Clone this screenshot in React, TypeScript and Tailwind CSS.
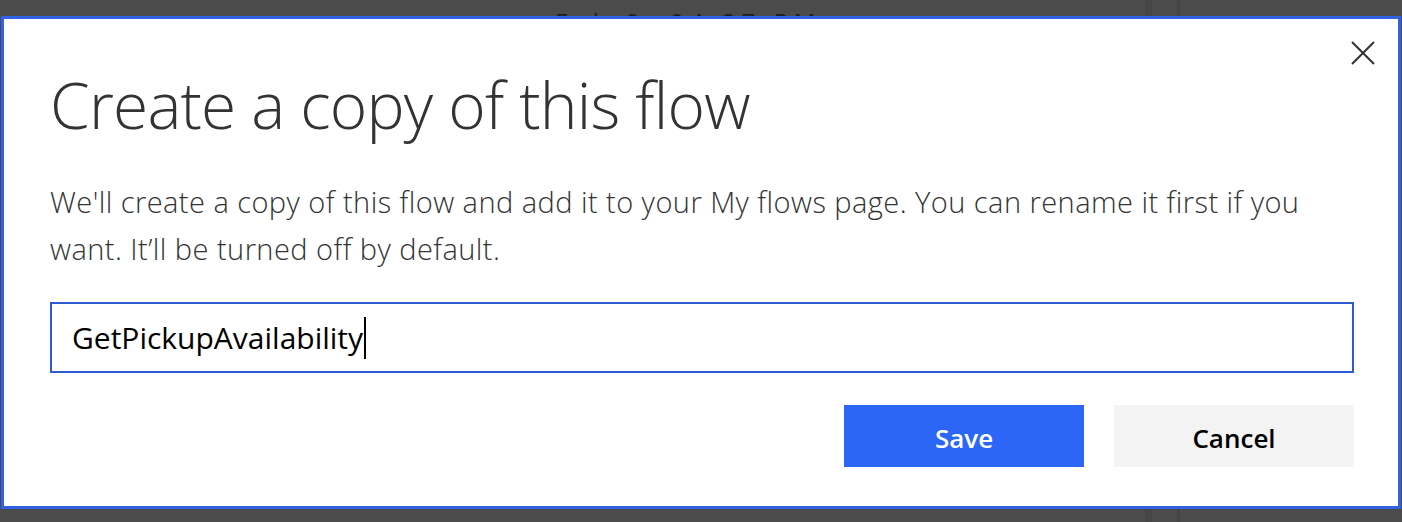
import React from "react";

const font = { fontFamily: '"Open Sans", "Noto Sans", sans-serif' };

export default function App() {
  return (
    <div
      className="relative w-[1402px] h-[522px] overflow-hidden bg-[#4b4b4b]"
      style={font}
    >
      {/* page behind the dialog */}
      <div className="absolute left-[1145px] top-0 h-full w-[7px] bg-[#464646]" />
      <div className="absolute left-[1177px] top-0 h-full w-[3px] bg-[#444444]" />
      <div className="absolute left-[555px] top-[4px] text-[24px] tracking-[6px] text-[#1f1f1f]">
        Feb 9, 04:27 PM
      </div>

      {/* dialog */}
      <div className="absolute left-[1px] top-[16px] w-[1400px] h-[493px] border-[3px] border-[#2f62e4] bg-white">
        <button className="absolute right-[21px] top-[20px] w-[28px] h-[28px] flex items-center justify-center">
          <svg width="26" height="26" viewBox="0 0 26 26">
            <path
              d="M2 2 L24 24 M24 2 L2 24"
              stroke="#333"
              strokeWidth="2"
              fill="none"
            />
          </svg>
        </button>

        <div className="flex flex-col pl-[46px] pr-[44px]">
          <h1 className="mt-[50px] text-[64px] leading-[72px] font-light text-[#333] tracking-[-0.8px]">
            Create a copy of this flow
          </h1>
          <p className="mt-[37px] text-[29px] leading-[47px] font-light text-[#333] tracking-[0.45px] pr-[40px]">
            We'll create a copy of this flow and add it to your My flows page.
            You can rename it first if you want. It’ll be turned off by default.
          </p>

          <div className="mt-[30px] h-[71px] border-2 border-[#2f5bd0] flex items-center pl-[20px]">
            <span className="text-[30px] text-black">GetPickupAvailability</span>
            <span className="ml-[1px] w-[2px] h-[42px] bg-black" />
          </div>

          <div className="mt-[32px] flex justify-end gap-[30px]">
            <button className="w-[240px] h-[62px] pt-[5px] bg-[#2b66f6] text-white text-[26px] font-semibold">
              Save
            </button>
            <button className="w-[240px] h-[62px] pt-[5px] bg-[#f3f3f3] text-black text-[26px] font-semibold">
              Cancel
            </button>
          </div>
        </div>
      </div>
    </div>
  );
}
